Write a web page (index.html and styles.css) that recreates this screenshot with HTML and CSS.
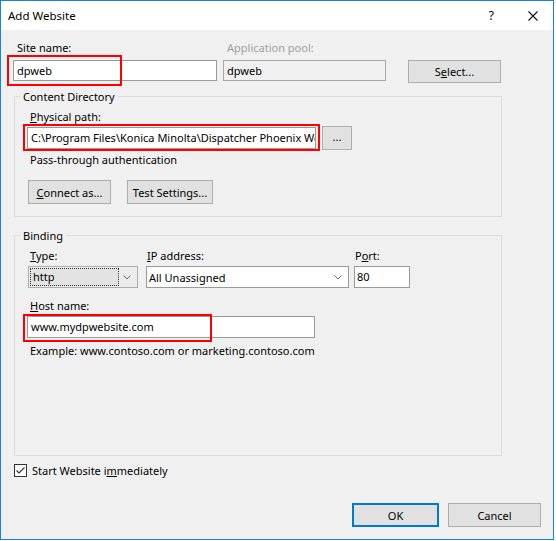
FILE: index.html
```html
<!DOCTYPE html>
<html>
<head>
<meta charset="utf-8">
<link rel="stylesheet" href="styles.css">
</head>
<body>
<div class="window">
  <div class="titlebar">
    <span class="title">Add Website</span>
    <span class="help">?</span>
    <svg class="close" width="10" height="10" viewBox="0 0 10 10"><path d="M0.5 0.5L9.5 9.5M9.5 0.5L0.5 9.5" stroke="#111" stroke-width="1.1" fill="none"/></svg>
  </div>
  <div class="body">
    <div class="row1">
      <div class="field site">
        <div class="lbl">Site name:</div>
        <div class="input">dpweb</div>
        <span class="redbox rb-site"></span>
      </div>
      <div class="field pool">
        <div class="lbl disabled">Application pool:</div>
        <div class="input readonly">dpweb</div>
      </div>
      <div class="btn select">S<u>e</u>lect...</div>
    </div>

    <fieldset class="group content">
      <legend>Content Directory</legend>
      <div class="lbl ind3"><u>P</u>hysical path:</div>
      <div class="path-row">
        <div class="hl">
          <div class="input path">C:\Program Files\Konica Minolta\Dispatcher Phoenix Web</div>
          <span class="redbox rb-path"></span>
        </div>
        <div class="btn browse">...</div>
      </div>
      <div class="note ind3">Pass-through authentication</div>
      <div class="btn-row">
        <div class="btn connect"><u>C</u>onnect as...</div>
        <div class="btn test">Test Settings...</div>
      </div>
    </fieldset>

    <fieldset class="group binding">
      <legend>Binding</legend>
      <div class="bind-row">
        <div class="field type">
          <div class="lbl ind2"><u>T</u>ype:</div>
          <div class="combo disabled-combo">
            <span class="focus">http</span>
            <svg class="chev" width="8" height="5" viewBox="0 0 8 5"><polyline points="0.5,0.5 4,4 7.5,0.5" fill="none" stroke="#6a6a6a" stroke-width="1"/></svg>
          </div>
        </div>
        <div class="field ip">
          <div class="lbl"><u>I</u>P address:</div>
          <div class="combo">
            <span class="ctext">All Unassigned</span>
            <svg class="chev" width="8" height="5" viewBox="0 0 8 5"><polyline points="0.5,0.5 4,4 7.5,0.5" fill="none" stroke="#6a6a6a" stroke-width="1"/></svg>
          </div>
        </div>
        <div class="field port">
          <div class="lbl">P<u>o</u>rt:</div>
          <div class="input ctl">80</div>
        </div>
      </div>
      <div class="lbl ind3 host-lbl"><u>H</u>ost name:</div>
      <div class="hl host-hl">
        <div class="input host">www.mydpwebsite.com</div>
        <span class="redbox rb-host"></span>
      </div>
      <div class="note ind3 example">Example: www.contoso.com or marketing.contoso.com</div>
    </fieldset>

    <div class="check-row">
      <span class="checkbox"><svg width="11" height="11" viewBox="0 0 11 11"><polyline points="1.5,5.5 4,8 9.5,2.5" fill="none" stroke="#333" stroke-width="1.1"/></svg></span>
      <span class="check-lbl">Start Website i<u>m</u>mediately</span>
    </div>

    <div class="footer">
      <div class="btn ok">OK</div>
      <div class="btn cancel">Cancel</div>
    </div>
  </div>
</div>
</body>
</html>
```
FILE: styles.css
```css
* { box-sizing: border-box; }
html, body { margin: 0; background: #fff; }
body {
  font-family: "Noto Sans", "Open Sans", sans-serif;
  font-size: 11px;
  color: #000;
}
u { text-decoration-thickness: 1px; text-underline-offset: 1px; }

.window {
  width: 554px;
  height: 540px;
  border: 1px solid #1883d7;
  background: #f0f0f0;
  display: flex;
  flex-direction: column;
}
.titlebar {
  flex: none;
  height: 29px;
  background: #fff;
  display: flex;
  align-items: center;
  padding-left: 7px;
  font-size: 11.5px;
}
.title { flex: 1; }
.help { margin-right: 34px; font-size: 12px; }
.close { margin-right: 15px; display: block; }

.body {
  flex: 1;
  display: flex;
  flex-direction: column;
  padding: 0 12px 12px 12px;
}

.lbl { line-height: 15px; height: 15px; white-space: nowrap; }
.disabled { color: #a0a0a0; }
.ind2 { padding-left: 2px; }
.ind3 { padding-left: 3px; }

.row1 { display: flex; margin-top: 10px; }
.field { display: flex; flex-direction: column; position: relative; }
.site { width: 204px; }
.site .lbl, .pool .lbl { padding-left: 4px; }
.pool { width: 163px; margin-left: 6px; }

.input {
  height: 21px;
  border: 1px solid #9a9a9a;
  background: #fff;
  margin-top: 5px;
  padding: 0 3px;
  line-height: 19px;
  white-space: nowrap;
  overflow: hidden;
}
.readonly { background: #f0f0f0; border-color: #a8a8a8; }

.btn {
  height: 24px;
  border: 1px solid #adadad;
  background: #e1e1e1;
  display: flex;
  align-items: center;
  justify-content: center;
  white-space: nowrap;
}
.select { width: 93px; height: 23px; margin-left: 22px; margin-top: 20px; }

.redbox {
  position: absolute;
  border: 2px solid #f00;
  pointer-events: none;
}
.rb-site { left: -6px; top: 15px; width: 115px; height: 31px; }

.group {
  margin: 6px 0 0 1px;
  width: 488px;
  border: 1px solid #dcdcdc;
  padding: 5px 12px 12px 12px;
  min-width: 0;
}
.group legend {
  padding: 0 3px;
  margin-left: -7px;
  line-height: 15px;
}
.binding { margin-top: 11px; padding-bottom: 97px; }

.path-row { display: flex; align-items: center; margin-top: 2px; }
.hl { position: relative; }
.path { width: 289px; height: 22px; margin-top: 0; line-height: 20px; }
.rb-path { left: -4px; top: -3px; width: 297px; height: 27px; }
.browse { width: 30px; margin-left: 6px; padding-bottom: 4px; }

.note { line-height: 15px; margin-top: 2px; white-space: nowrap; }

.btn-row { display: flex; margin-top: 13px; }
.connect { width: 83px; margin-left: 1px; }
.test { width: 86px; margin-left: 16px; }

.bind-row { display: flex; }
.type { width: 110px; margin-left: 1px; }
.ip { width: 203px; margin-left: 8px; }
.ip .lbl { padding-left: 1px; }
.port { width: 56px; margin-left: 5px; }
.port .lbl { padding-left: 1px; }

.combo {
  margin-top: 3px;
  height: 22px;
  border: 1px solid #9a9a9a;
  background: #fff;
  display: flex;
  align-items: center;
  padding-left: 2px;
  padding-right: 6px;
}
.ctext { flex: 1; white-space: nowrap; }
.disabled-combo { background: #ececec; border-color: #acacac; padding-left: 1px; }
.focus {
  width: 89px;
  height: 18px;
  line-height: 16px;
  border: 1px dotted #333;
  background: #e3e3e3;
  padding-left: 2px;
  margin-right: auto;
}
.chev { display: block; }
.ctl { margin-top: 3px; height: 22px; line-height: 20px; padding-left: 2px; }

.host-lbl { margin-top: 10px; }
.host-hl { margin-top: 3px; width: 288px; }
.host { margin-top: 0; height: 22px; line-height: 20px; }
.rb-host { left: -4px; top: -2px; width: 189px; height: 28px; }
.example { margin-top: 5px; }

.check-row { display: flex; align-items: center; margin-top: 7px; height: 15px; }
.checkbox {
  width: 13px;
  height: 13px;
  margin-left: 1px;
  border: 1px solid #333;
  background: #fff;
  display: flex;
  align-items: center;
  justify-content: center;
}
.checkbox svg { display: block; }
.check-lbl { margin-left: 5px; line-height: 15px; }

.footer { margin-top: auto; display: flex; justify-content: flex-end; }
.ok { width: 87px; border: 2px solid #0078d7; }
.cancel { width: 93px; margin-left: 9px; }
```
